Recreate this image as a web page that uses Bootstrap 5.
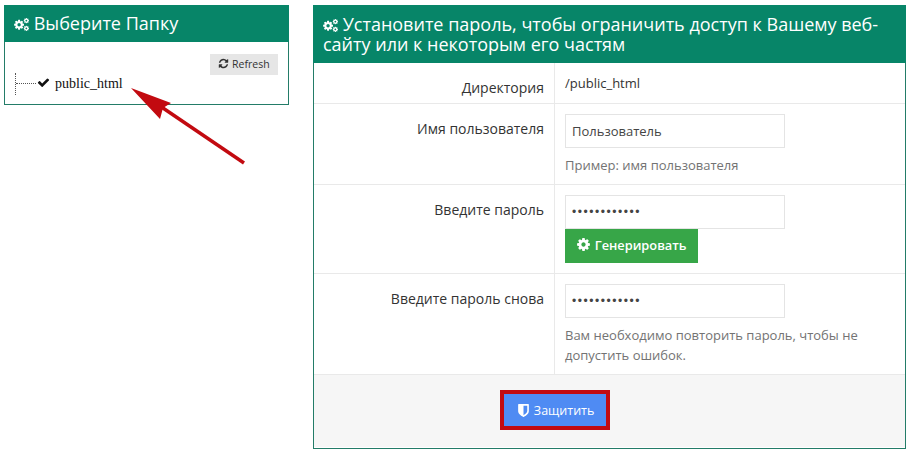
<!DOCTYPE html>
<html lang="ru">
<head>
  <meta charset="UTF-8">
  <meta name="viewport" content="width=device-width, initial-scale=1.0">
  <title>Защита паролем</title>
  <link href="https://cdn.jsdelivr.net/npm/bootstrap@5.3.2/dist/css/bootstrap.min.css" rel="stylesheet">
  <style>
    body {
      font-family: "Open Sans", sans-serif;
      font-size: 13px;
      color: #333;
      background: #fff;
      padding: 5px 5px 0 4px;
      overflow: hidden;
    }
    .fa-ico { fill: currentColor; flex-shrink: 0; vertical-align: -1px; }
    .folder-panel { width: 285px; height: 100px; }
    .access-panel { height: 444px; }
    .panel-box { border: 1px solid #237c68; position: relative; }
    .panel-head {
      background: #078568;
      color: #fff;
      font-size: 18px;
      line-height: 20px;
      padding: 9px 10px;
      margin: -1px -1px 0;
    }
    .panel-head .fa-ico { margin-right: 0; }
    .folder-head { height: 37px; padding-top: 8px; }
    .folder-body { padding: 12px 10px 0 10px; position: relative; }
    .refresh-btn {
      background: #e6e6e6;
      color: #333;
      font-size: 10.5px;
      line-height: 15px;
      border: 0;
      border-radius: 0;
      width: 68px;
      height: 21px;
      padding: 0;
    }
    .tree-node {
      font-family: "Liberation Serif", serif;
      font-size: 14px;
      color: #111;
      line-height: 16px;
      border-left: 1px dotted #555;
      height: 22px;
      width: 120px;
      margin-top: -2px;
      padding-top: 3px;
      padding-left: 21px;
      position: relative;
    }
    .tree-node::before {
      content: "";
      position: absolute;
      left: 0;
      top: 10px;
      width: 20px;
      border-top: 1px dotted #555;
    }
    .tree-node .fa-ico { margin-right: 5px; vertical-align: -1px; }
    .form-line { border-bottom: 1px solid #e9e9e9; }
    .line-dir { height: 41px; }
    .line-user { height: 81px; }
    .line-pass { height: 89px; }
    .line-again { height: 101px; }
    .line-label {
      width: 241px;
      flex-shrink: 0;
      border-right: 1px solid #e9e9e9;
      text-align: right;
      font-size: 14px;
      padding: 16px 10px 0 0;
      line-height: 18px;
    }
    .line-value { padding: 10px 10px 0; flex: 1; line-height: 18px; }
    .line-dir .line-value { padding-top: 11px; }
    .pass-input.form-control {
      width: 220px;
      height: 34px;
      border: 1px solid #e4e4e4;
      border-radius: 0;
      font-size: 13px;
      padding: 4px 6px;
      color: #444;
      box-shadow: none;
    }
    .pass-input.pass-dots { letter-spacing: 1.55px; font-family: "Liberation Sans", sans-serif; font-size: 12px; }
    .hint-text { color: #737373; font-size: 13px; line-height: 20px; margin-top: 7px; }
    .gen-btn {
      background: #37a648;
      color: #fff;
      border: 0;
      border-radius: 0;
      height: 34px;
      width: 133px;
      margin-top: 0;
      font-size: 12.8px;
      font-weight: 600;
      padding: 0;
      display: block;
    }
    .gen-btn:hover { background: #37a648; color: #fff; }
    .gen-btn .fa-ico { vertical-align: -2px; }
    .form-foot {
      background: #f6f6f6;
      height: 72px;
      padding-top: 15px;
      padding-left: 186px;
    }
    .protect-btn {
      background: #4f8bf3;
      color: #fff;
      border: 4px solid #c20a10;
      border-radius: 0;
      width: 110px;
      height: 40px;
      font-size: 12.5px;
      padding: 3px 0 0;
    }
    .protect-btn:hover { background: #4f8bf3; color: #fff; border-color: #c20a10; }
    .protect-btn .fa-ico { vertical-align: -3px; }
    .red-arrow { position: absolute; left: 0; top: 0; pointer-events: none; }
  </style>
</head>
<body>
  <svg width="0" height="0" class="position-absolute">
    <defs>
      <symbol id="ico-cog" viewBox="0 0 1792 1792">
        <path d="M1152 896q0-106-75-181t-181-75-181 75-75 181 75 181 181 75 181-75 75-181zm512-109v222q0 12-8 23t-20 13l-185 28q-19 54-39 91 35 50 107 138 10 12 10 25t-9 23q-27 37-99 108t-94 71q-12 0-26-9l-138-108q-44 23-91 38-16 136-29 186-7 28-36 28h-222q-14 0-24.5-8.5t-11.5-21.5l-28-184q-49-16-90-37l-141 107q-10 9-25 9-14 0-25-11-126-114-165-168-7-10-7-23 0-12 8-23 15-21 51-66.5t54-70.5q-27-50-41-99l-183-27q-13-2-21-12.5t-8-23.5v-222q0-12 8-23t19-13l186-28q14-46 39-92-40-57-107-138-10-12-10-24 0-10 9-23 26-36 98.5-107.5t94.5-71.5q13 0 26 10l138 107q44-23 91-38 16-136 29-186 7-28 36-28h222q14 0 24.5 8.5t11.5 21.5l28 184q49 16 90 37l142-107q9-9 24-9 13 0 25 10 129 119 165 170 7 8 7 22 0 12-8 23-15 21-51 66.5t-54 70.5q26 50 41 98l183 28q13 2 21 12.5t8 23.5z"/>
      </symbol>
      <symbol id="ico-cogs" viewBox="0.6 0.4 13 11.2">
        <use href="#ico-cog" x="0" y="1.2" width="10" height="10"/>
        <use href="#ico-cog" x="8.6" y="0" width="5.4" height="5.4"/>
        <use href="#ico-cog" x="8.6" y="6.6" width="5.4" height="5.4"/>
      </symbol>
      <symbol id="ico-refresh" viewBox="0 0 1792 1792">
        <path d="M1639 1056q0 5-1 7-64 268-268 434.5t-478 166.5q-146 0-282.5-55t-243.5-157l-129 129q-19 19-45 19t-45-19-19-45v-448q0-26 19-45t45-19h448q26 0 45 19t19 45-19 45l-137 137q71 66 161 102t187 36q134 0 250-65t186-179q11-17 53-117 8-23 30-23h192q13 0 22.5 9.5t9.5 22.5zm25-800v448q0 26-19 45t-45 19h-448q-26 0-45-19t-19-45 19-45l138-138q-148-137-349-137-134 0-250 65t-186 179q-11 17-53 117-8 23-30 23h-199q-13 0-22.5-9.5t-9.5-22.5v-7q65-268 270-434.5t480-166.5q146 0 284 55.5t245 156.5l130-129q19-19 45-19t45 19 19 45z"/>
      </symbol>
      <symbol id="ico-check" viewBox="0 0 1792 1792">
        <path d="M1671 566q0 40-28 68l-724 724-136 136q-28 28-68 28t-68-28l-136-136-362-362q-28-28-28-68t28-68l136-136q28-28 68-28t68 28l294 295 656-657q28-28 68-28t68 28l136 136q28 28 28 68z"/>
      </symbol>
      <symbol id="ico-shield" viewBox="0 0 1792 1792">
        <path d="M1344 960v-640h-448v1137q119-63 213-137 235-184 235-360zm192-768v768q0 86-33.5 170.5t-83 150-118 127.5-126.5 103-121 77.5-89.5 49.5-42.5 20q-12 6-26 6t-26-6q-16-7-42.5-20t-89.5-49.5-121-77.5-126.5-103-118-127.5-83-150-33.5-170.5v-768q0-26 19-45t45-19h1152q26 0 45 19t19 45z"/>
      </symbol>
    </defs>
  </svg>

  <div class="d-flex gap-4 align-items-start">
    <div class="panel-box folder-panel flex-shrink-0">
      <div class="panel-head folder-head"><svg class="fa-ico" width="15" height="13"><use href="#ico-cogs"/></svg> Выберите Папку</div>
      <div class="folder-body">
        <div class="d-flex justify-content-end">
          <button type="button" class="btn refresh-btn"><svg class="fa-ico" width="11" height="11"><use href="#ico-refresh"/></svg> Refresh</button>
        </div>
        <div class="tree-node"><svg class="fa-ico" width="13" height="13"><use href="#ico-check"/></svg>public_html</div>
      </div>
    </div>

    <div class="panel-box access-panel flex-grow-1">
      <div class="panel-head"><svg class="fa-ico" width="15" height="13"><use href="#ico-cogs"/></svg> Установите пароль, чтобы ограничить доступ к Вашему веб-сайту или к некоторым его частям</div>
      <div class="form-line line-dir d-flex">
        <div class="line-label">Директория</div>
        <div class="line-value">/public_html</div>
      </div>
      <div class="form-line line-user d-flex">
        <div class="line-label">Имя пользователя</div>
        <div class="line-value">
          <input type="text" class="form-control pass-input" value="Пользователь">
          <div class="hint-text">Пример: имя пользователя</div>
        </div>
      </div>
      <div class="form-line line-pass d-flex">
        <div class="line-label">Введите пароль</div>
        <div class="line-value">
          <input type="password" class="form-control pass-input pass-dots" value="Пользователь">
          <button type="button" class="btn gen-btn"><svg class="fa-ico" width="15" height="15"><use href="#ico-cog"/></svg> Генерировать</button>
        </div>
      </div>
      <div class="form-line line-again d-flex">
        <div class="line-label">Введите пароль снова</div>
        <div class="line-value">
          <input type="password" class="form-control pass-input pass-dots" value="Пользователь">
          <div class="hint-text">Вам необходимо повторить пароль, чтобы не допустить ошибок.</div>
        </div>
      </div>
      <div class="form-foot">
        <button type="button" class="btn protect-btn"><svg class="fa-ico" width="15" height="15"><use href="#ico-shield"/></svg> Защитить</button>
      </div>
    </div>
  </div>

  <svg class="red-arrow" width="300" height="180" viewBox="0 0 300 180">
    <line x1="244" y1="163" x2="160" y2="106" stroke="#c20a10" stroke-width="3.5"/>
    <polygon points="131,88 171,103 163,108 160,119" fill="#c20a10"/>
  </svg>
</body>
</html>
